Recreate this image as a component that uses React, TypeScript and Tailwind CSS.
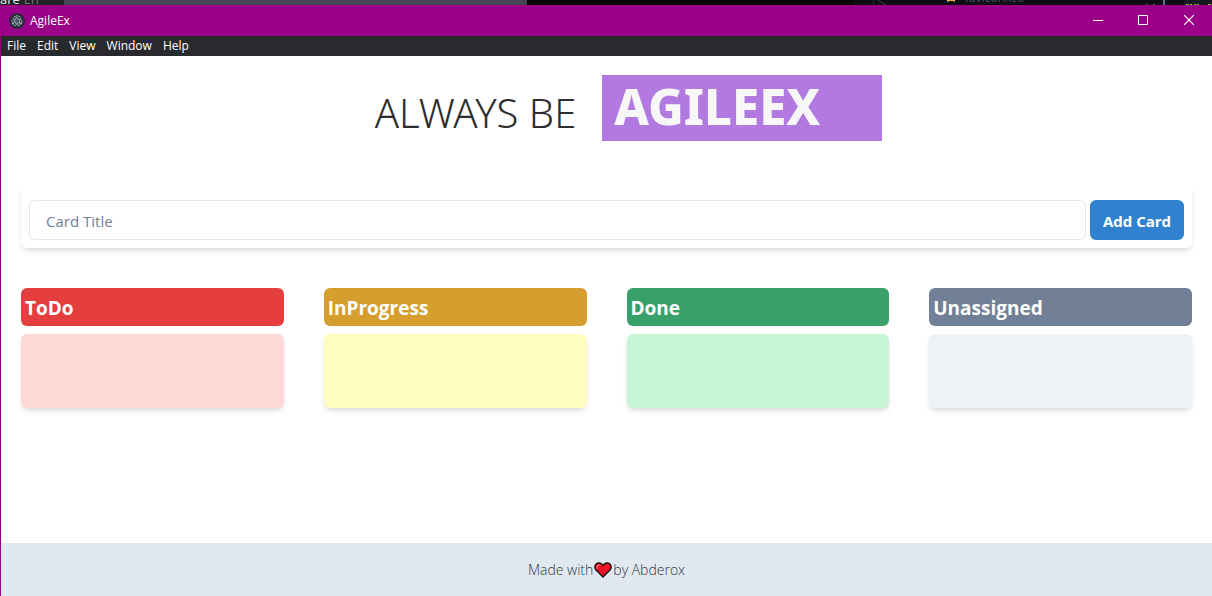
import { useState } from "react";

const columns = [
  { title: "ToDo", head: "bg-[#e53e3e]", body: "bg-[#fed7d7]" },
  { title: "InProgress", head: "bg-[#d69e2e]", body: "bg-[#fefcbf]" },
  { title: "Done", head: "bg-[#38a169]", body: "bg-[#c6f6d5]" },
  { title: "Unassigned", head: "bg-[#718096]", body: "bg-[#edf2f7]" },
];

const menus = ["File", "Edit", "View", "Window", "Help"];

function AppIcon() {
  return (
    <svg className="size-4" viewBox="0 0 16 16" fill="none" aria-hidden="true">
      <circle cx="8" cy="8" r="8" fill="#2b2e3a" />
      <g stroke="#9fb4bd" strokeWidth="0.8">
        <ellipse cx="8" cy="8" rx="5.2" ry="2.1" strokeDasharray="8 1.5" />
        <ellipse cx="8" cy="8" rx="5.2" ry="2.1" strokeDasharray="8 1.5" transform="rotate(60 8 8)" />
        <ellipse cx="8" cy="8" rx="5.2" ry="2.1" strokeDasharray="8 1.5" transform="rotate(120 8 8)" />
      </g>
      <g fill="#9fb4bd">
        <circle cx="8" cy="8" r="0.7" />
        <circle cx="3.6" cy="10.4" r="0.8" />
        <circle cx="12.4" cy="10.4" r="0.8" />
        <circle cx="8" cy="2.8" r="0.8" />
      </g>
    </svg>
  );
}

/* Sliver of the editor window that shows above the app window. */
function EditorStrip() {
  return (
    <div className="flex h-[5px] shrink-0 items-end overflow-hidden bg-[#0b0e14]" aria-hidden="true">
      <div className="flex h-[5px] w-16 items-end gap-1 bg-[#202324] text-[13px] leading-[12px] text-[#e8e8e8]">
        <span>are</span>
        <span className="text-[#77797a]">En</span>
      </div>
      <div className="h-[5px] w-[463px] bg-[#454754]" />
      <div className="h-[5px] w-[326px] bg-black" />
      <svg className="h-[5px] w-[112px] shrink-0" viewBox="0 0 112 5" fill="none">
        <path d="M20.5 0v5" stroke="#1f2c45" />
        <path d="M25 0l8 5" stroke="#3f444d" />
        <path d="M94 2V0h8v2l-2-1h-3z" fill="#e0b341" />
      </svg>
      <span className="w-[180px] text-xs leading-[14px] text-[#465064]">favicon.ico</span>
      <svg className="h-[5px] min-w-0 grow" viewBox="0 0 67 5" preserveAspectRatio="xMinYMid slice" fill="none">
        <path d="M39 0h28v5H39z" fill="#141a20" />
        <path d="M1 4.5h2M8 4.5h2" stroke="#525963" />
        <path d="M18 0l2 1-2 1 2 1-2 1 2 1" stroke="#5e93c9" />
        <path d="M41 4.5h3M45 4.5h2M49 4.5h2M52 4.5h2" stroke="#8bbe2c" />
        <path d="M63 4.5h3" stroke="#8bbe2c" />
      </svg>
    </div>
  );
}

function TitleBar() {
  return (
    <header className="flex h-[31px] shrink-0 items-center bg-[#9b0089] pl-2 text-white">
      <AppIcon />
      <span className="ml-[5px] grow text-xs">AgileEx</span>
      <button type="button" aria-label="Minimize" className="flex h-full w-[45px] items-center justify-center">
        <svg className="h-[9px] w-2.5" viewBox="0 0 10 9" stroke="currentColor"><path d="M0 4.5h10" /></svg>
      </button>
      <button type="button" aria-label="Maximize" className="flex h-full w-[46px] items-center justify-center pb-px">
        <svg className="size-2.5" viewBox="0 0 10 10" fill="none" stroke="currentColor"><path d="M.5.5h9v9h-9z" /></svg>
      </button>
      <button type="button" aria-label="Close" className="flex h-full w-[46px] items-center justify-center pb-px">
        <svg className="size-2.5" viewBox="0 0 10 10" stroke="currentColor" strokeWidth="1.2"><path d="M0 0l10 10M10 0L0 10" /></svg>
      </button>
    </header>
  );
}

export default function App() {
  const [title, setTitle] = useState("");
  return (
    <div className="flex min-h-screen flex-col bg-white font-['Open_Sans',sans-serif]">
      <EditorStrip />
      <div className="flex grow flex-col border-l border-[#9b0089]">
        <TitleBar />
        <nav className="flex h-5 shrink-0 items-center gap-[11px] bg-[#292a2d] pl-1.5 text-xs text-white">
          {menus.map((m) => (
            <button type="button" key={m}>{m}</button>
          ))}
        </nav>
        <main className="grow px-5 pt-[19px]">
          <h1 className="flex items-start justify-center gap-[26px] pl-11 uppercase">
            <span className="pt-2 font-['Noto_Sans',sans-serif] text-[40px] leading-[60px] font-light text-[#2d2d2d]">Always be</span>
            <span className="w-[280px] bg-[#b279e1] px-3 pb-1 font-['Noto_Sans',sans-serif] text-[49px] leading-[62px] font-extrabold text-[#f7f7f7]">AgileEx</span>
          </h1>
          <form
            className="mt-[41px] flex gap-1 rounded-md p-2 pt-4 shadow-md"
            onSubmit={(e) => e.preventDefault()}
          >
            <input
              aria-label="Card Title"
              placeholder="Card Title"
              value={title}
              onChange={(e) => setTitle(e.target.value)}
              className="h-10 min-w-0 grow rounded-md border border-[#e2e8f0] px-4 pt-0.5 text-[15px] text-gray-800 placeholder:text-[#718096]"
            />
            <button type="submit" className="h-10 w-[94px] rounded-md bg-[#3182ce] pt-0.5 text-[15px] font-bold text-white">
              Add Card
            </button>
          </form>
          <div className="mt-10 grid grid-cols-4 gap-10">
            {columns.map((c) => (
              <section key={c.title}>
                <h2 className={`rounded-md px-1 pt-1.5 pb-1 text-[19px] leading-7 font-bold text-white ${c.head}`}>{c.title}</h2>
                <div className={`mt-2 h-[74px] rounded-md shadow-md ${c.body}`} />
              </section>
            ))}
          </div>
        </main>
        <footer className="flex h-[53px] shrink-0 items-center justify-center bg-[#e2e8f0] text-sm font-light text-[#2d3748]">
          <span>Made with</span>
          <svg className="mx-px size-[18px]" viewBox="0 0 16 16" role="img" aria-label="love">
            <path d="M8 14.2 1.6 7.8C.3 6.4.4 4 1.9 2.7c1.6-1.4 4-1.2 5.3.3l.8.9.8-.9c1.3-1.5 3.7-1.7 5.3-.3 1.5 1.3 1.6 3.7.3 5.1z" fill="#ee1126" stroke="#111" strokeWidth="1.2" />
            <path d="M3 6.4C2.6 4.9 3.5 3.6 5 3.7" fill="none" stroke="#f4705f" strokeWidth="1.2" strokeLinecap="round" />
          </svg>
          <span>by Abderox</span>
        </footer>
      </div>
    </div>
  );
}
